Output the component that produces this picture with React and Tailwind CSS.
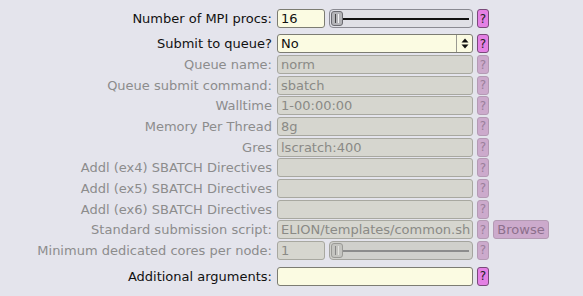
import React from 'react';

const font = { fontFamily: '"DejaVu Sans", Verdana, sans-serif' };

function Help({ enabled }) {
  return (
    <div
      className={`w-[12px] h-[19px] rounded-[3px] border flex items-center justify-center text-[12px] leading-none ${
        enabled
          ? 'bg-[#e480e4] border-[#7a4a7a] text-[#222]'
          : 'bg-[#ccaacc] border-[#b49ab4] text-[#9a7e9a]'
      }`}
    >
      ?
    </div>
  );
}

function Slider({ enabled, width }) {
  return (
    <div
      className={`h-[19px] rounded-[4px] border flex items-center px-[1px] relative ${
        enabled ? 'border-[#8a8a92] bg-[#e0e0e6]' : 'border-[#a4a49e] bg-[#d0d0cc]'
      }`}
      style={{ width }}
    >
      <div
        className={`absolute left-[8px] right-[3px] top-[8px] h-[2px] ${
          enabled ? 'bg-[#111]' : 'bg-[#8c8c8c]'
        }`}
      />
      <div
        className={`relative z-10 w-[12px] h-[15px] rounded-[3px] border flex items-center justify-center gap-[2px] ${
          enabled ? 'bg-[#b4b4b8] border-[#6c6c72]' : 'bg-[#c4c4c0] border-[#9a9a96]'
        }`}
      >
        <div className={`w-[1px] h-[9px] ${enabled ? 'bg-[#444]' : 'bg-[#888]'}`} />
        <div className={`w-[1px] h-[9px] ${enabled ? 'bg-[#f4f4f4]' : 'bg-[#e4e4e0]'}`} />
      </div>
    </div>
  );
}

function Field({ value, enabled, width = 196 }) {
  return (
    <div
      className={`h-[19px] rounded-[3px] border px-[3px] flex items-center text-[13px] leading-[17px] whitespace-nowrap overflow-hidden ${
        enabled
          ? 'bg-[#fbfbe2] border-[#7c7c72] text-[#111]'
          : 'bg-[#d6d6cf] border-[#a8a8a0] text-[#8a8a86]'
      }`}
      style={{ width }}
    >
      {value}
    </div>
  );
}

function Label({ children, enabled }) {
  return (
    <div
      className={`w-[273px] pr-[1px] text-right text-[13px] leading-[19px] whitespace-nowrap ${
        enabled ? 'text-[#111]' : 'text-[#8c8c8c]'
      }`}
    >
      {children}
    </div>
  );
}

const disabledRows = [
  { label: 'Queue name:', value: 'norm' },
  { label: 'Queue submit command:', value: 'sbatch' },
  { label: 'Walltime', value: '1-00:00:00' },
  { label: 'Memory Per Thread', value: '8g' },
  { label: 'Gres', value: 'lscratch:400' },
  { label: 'Addl (ex4) SBATCH Directives', value: '' },
  { label: 'Addl (ex5) SBATCH Directives', value: '' },
  { label: 'Addl (ex6) SBATCH Directives', value: '' },
];

export default function App() {
  return (
    <div className="w-[583px] h-[296px] bg-[#e4e4ec] overflow-hidden" style={font}>
      <div className="flex flex-col pt-[9px]">
        {/* MPI procs */}
        <div className="flex items-center gap-[4px] h-[19px]">
          <Label enabled>Number of MPI procs:</Label>
          <Field value="16" enabled width={48} />
          <Slider enabled width={144} />
          <Help enabled />
        </div>

        {/* Submit to queue */}
        <div className="flex items-center gap-[4px] h-[19px] mt-[6px]">
          <Label enabled>Submit to queue?</Label>
          <div className="w-[196px] h-[19px] rounded-[3px] border border-[#7c7c72] bg-[#fbfbe2] flex items-center text-[13px] leading-[17px] text-[#111]">
            <div className="flex-1 px-[3px]">No</div>
            <div className="w-[16px] h-full border-l border-[#9a9a92] flex items-center justify-center">
              <svg width="8" height="11" viewBox="0 0 8 11">
                <path d="M4 0.5 L7.5 4.5 H0.5 Z" fill="#111" />
                <path d="M4 10.5 L7.5 6.5 H0.5 Z" fill="#111" />
              </svg>
            </div>
          </div>
          <Help enabled />
        </div>

        {/* disabled queue options */}
        <div className="flex flex-col gap-[1.67px] mt-[2px]">
          {disabledRows.map((r) => (
            <div key={r.label} className="flex items-center gap-[4px] h-[19px]">
              <Label>{r.label}</Label>
              <Field value={r.value} />
              <Help />
            </div>
          ))}
          <div className="flex items-center gap-[4px] h-[19px]">
            <Label>Standard submission script:</Label>
            <Field value="ELION/templates/common.sh" />
            <Help />
            <div className="w-[56px] h-[19px] rounded-[3px] border border-[#b49ab4] bg-[#ccaacc] text-[#8c708c] text-[13px] leading-[17px] flex items-center justify-center">
              Browse
            </div>
          </div>
          <div className="flex items-center gap-[4px] h-[19px]">
            <Label>Minimum dedicated cores per node:</Label>
            <Field value="1" width={48} />
            <Slider width={144} />
            <Help />
          </div>
        </div>

        {/* Additional arguments */}
        <div className="flex items-center gap-[4px] h-[19px] mt-[7px]">
          <Label enabled>Additional arguments:</Label>
          <Field value="" enabled />
          <Help enabled />
        </div>
      </div>
    </div>
  );
}
